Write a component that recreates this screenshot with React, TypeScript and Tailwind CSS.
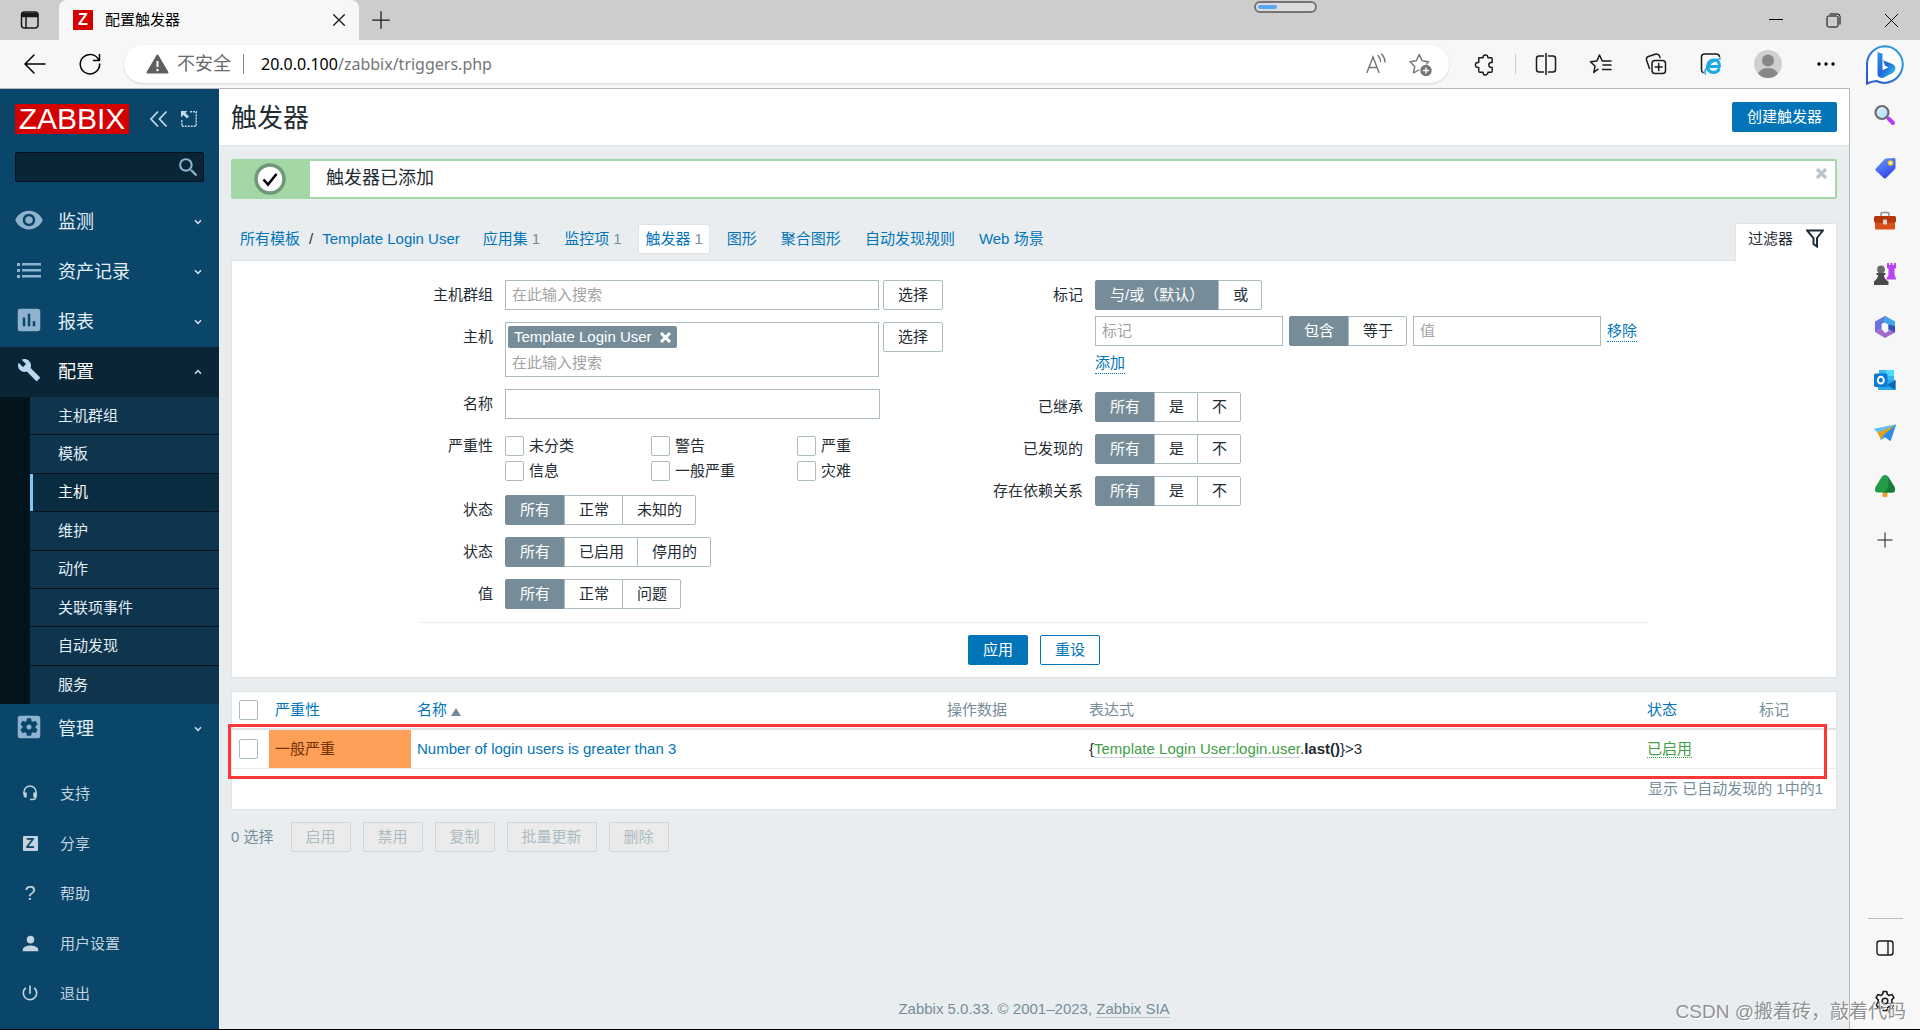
import React from 'react';
import type { ReactNode } from 'react';
import {
  MdAssessment,
  MdBuild,
  MdPerson,
  MdPowerSettingsNew,
  MdSearch,
  MdSettingsApplications,
  MdVisibility,
} from 'react-icons/md';

/* ---------- line icons of the browser chrome ---------- */

function Line({ size = 24, w = 1.5, children, className = '' }: { size?: number; w?: number; children: ReactNode; className?: string }) {
  return (
    <svg width={size} height={size} viewBox="0 0 24 24" fill="none" stroke="currentColor" strokeWidth={w} strokeLinecap="round" strokeLinejoin="round" className={`shrink-0 ${className}`} aria-hidden="true">
      {children}
    </svg>
  );
}

function TitleBar() {
  return (
    <header className="relative flex h-10 shrink-0 bg-[#cdcdcd] text-[#1b1b1b]">
      <button type="button" aria-label="标签操作" className="flex w-[59px] items-center justify-center">
        <svg width="20" height="20" viewBox="0 0 20 20" fill="none" stroke="#1b1b1b" strokeWidth="1.5" aria-hidden="true">
          <rect x="1.5" y="2" width="16.5" height="16" rx="3" />
          <path d="M2 3.6h15.500v3H2z" fill="#1b1b1b" />
          <path d="M6 7v11" />
        </svg>
      </button>
      <div className="flex w-[300px] items-center rounded-t-lg bg-[#f7f7f7] pl-3.5 pr-2">
        <span className="flex h-5 w-5 items-center justify-center bg-[#d40000] text-base font-bold leading-5 text-white">Z</span>
        <span className="ml-3 grow text-[15px] leading-5 text-black">配置触发器</span>
        <button type="button" aria-label="关闭标签页" className="p-1">
          <Line size={16} w={2}><path d="M4 4l16 16M20 4L4 20" /></Line>
        </button>
      </div>
      <button type="button" aria-label="新建标签页" className="flex w-[43px] items-center justify-center">
        <Line size={20}><path d="M12 2v20M2 12h20" /></Line>
      </button>
      <div className="grow" />
      <div className="absolute left-[1254px] top-px flex h-3 w-[63px] items-center rounded-full border-2 border-[#757575] bg-[#dcdcdc] px-0.5">
        <div className="h-1 w-[19px] rounded-full bg-[#58a6f8]" />
      </div>
      <div className="flex">
        <button type="button" aria-label="最小化" className="flex w-[57px] items-center justify-center">
          <svg width="14" height="14" viewBox="0 0 14 14" stroke="#000" aria-hidden="true"><path d="M0 6.500h14" /></svg>
        </button>
        <button type="button" aria-label="还原" className="flex w-[58px] items-center justify-center">
          <svg width="15" height="15" viewBox="0 0 15 15" stroke="#000" fill="none" aria-hidden="true"><rect x="1" y="3" width="11" height="11" rx="1.500" /><path d="M3.500 1h8q2.500 0 2.500 2.500v8" /></svg>
        </button>
        <button type="button" aria-label="关闭" className="flex w-[58px] items-center justify-center">
          <svg width="15" height="15" viewBox="0 0 15 15" stroke="#000" aria-hidden="true"><path d="M1 1l13 13M14 1L1 14" /></svg>
        </button>
      </div>
    </header>
  );
}

function ChromeButton({ label, children }: { label: string; children: ReactNode }) {
  return (
    <button type="button" aria-label={label} className="flex h-10 w-[55px] shrink-0 items-center justify-center text-[#1b1b1b]">
      {children}
    </button>
  );
}

function Toolbar() {
  return (
    <div className="flex h-12 shrink-0 items-center bg-[#f7f7f7]">
      <button type="button" aria-label="返回" className="ml-1.5 flex w-[57px] items-center justify-center">
        <Line size={24}><path d="M22 12H2.500M11 3L2 12l9 9" /></Line>
      </button>
      <button type="button" aria-label="刷新" className="flex w-[53px] items-center justify-center">
        <Line size={24}><path d="M21 8.500A9.700 9.700 0 1 0 21.700 12M21.500 2.500v6h-6" /></Line>
      </button>
      <div className="ml-2 flex h-[38px] min-w-0 grow items-center rounded-full bg-white pl-[22px] pr-[7px] text-lg leading-6 shadow-sm">
        <svg width="23" height="20" viewBox="0 0 23 20" className="shrink-0" aria-hidden="true">
          <path d="M11.500 1.500L21.500 18.500h-20z" fill="#5f5f5f" stroke="#5f5f5f" strokeWidth="2" strokeLinejoin="round" />
          <path d="M11.500 7v6" stroke="#fff" strokeWidth="2" />
          <circle cx="11.500" cy="16" r="1.200" fill="#fff" />
        </svg>
        <span className="ml-2 shrink-0 text-[#6a6a6a]">不安全</span>
        <span className="ml-3 h-5 w-px bg-[#8a8a8a]" />
        <div className="ml-[17px] grow whitespace-nowrap font-['Noto_Sans',sans-serif] text-base text-[#757575]">
          <span className="text-black">20.0.0.100</span>/zabbix/triggers.php
        </div>
        <button type="button" aria-label="朗读此页" className="flex w-11 justify-center text-[#757575]">
          <svg width="22" height="24" viewBox="0 0 22 24" fill="none" stroke="currentColor" strokeWidth="1.400" strokeLinecap="round" aria-hidden="true"><path d="M2 20.500L8 5l6 15.500M4 15.500h8M13 3.500q2.500 2.500 2.500 6M16.500 2q3.500 3.500 3.500 8" /></svg>
        </button>
        <button type="button" aria-label="收藏此页" className="flex w-11 justify-center text-[#757575]">
          <Line w={1.4}>
            <path d="M10.800 18l-5.300 3 1.200-6.500L2 9.700l6.300-1L11.200 2.500l2.900 6.200 6.500 1-2 2.200" />
            <circle cx="18" cy="18.500" r="5" fill="currentColor" />
            <path d="M18 16v5M15.500 18.500h5" stroke="#fff" />
          </Line>
        </button>
      </div>
      <div className="-mr-[3px] ml-2 flex items-center">
        <ChromeButton label="扩展">
          <Line size={23}><path d="M6 5h4.500V4.500a2.500 2.500 0 0 1 5 0V5H19q1 0 1 1v4h-1a2.500 2.500 0 0 0 0 5h1v4q0 1-1 1h-3.500v.5a2.500 2.500 0 0 1-5 0V20H7q-1 0-1-1v-4H5a2.500 2.500 0 0 1 0-5h1z" /></Line>
        </ChromeButton>
        <span className="ml-[3px] mr-0.5 h-5 w-px bg-[#c8c8c8]" />
        <ChromeButton label="分屏">
          <Line><path d="M9.500 4H5Q2.500 4 2.500 6.500v11Q2.500 20 5 20h4.500M14.500 4H19q2.500 0 2.500 2.500v11Q21.500 20 19 20h-4.500M12 1.500v21" /></Line>
        </ChromeButton>
        <ChromeButton label="收藏夹">
          <Line><path d="M9 17.200L4.800 20.500l1.300-6.300L1.500 9.700l6.400-.8L10.500 3l2.700 5.900h8.800M14 13h8M13.500 17.500H22" /></Line>
        </ChromeButton>
        <ChromeButton label="集锦">
          <Line><rect x="8" y="8.500" width="13.500" height="13" rx="3" /><path d="M14.700 11.500v7M11.200 15h7M5.500 16.500L2.500 8Q2 5.500 4.300 4.500L12 2q2.500-.5 3.500 2l.5 1.500" /></Line>
        </ChromeButton>
        <ChromeButton label="IE 模式">
          <Line>
            <path d="M4 20.500Q2.500 20 2.500 18V5q0-3 3-3H17q3 0 3.500 2.500" />
            <path d="M8.500 14.500h12q.3-6.500-5.700-6.500c-8 0-8.500 12.500-.5 12.500q4 0 5.500-3" stroke="#1ba8e8" strokeWidth="3" />
            <path d="M6.500 22c-3-2 4-13 15-15.500" stroke="#1ba8e8" strokeWidth="1.500" />
          </Line>
        </ChromeButton>
        <button type="button" aria-label="个人资料" className="flex w-[60px] justify-center">
          <svg width="28" height="28" viewBox="0 0 28 28" aria-hidden="true">
            <circle cx="14" cy="14" r="14" fill="#d2d0ce" />
            <circle cx="14" cy="10.500" r="6" fill="#8a8886" />
            <path d="M4 23.500q3-5.500 10-5.500t10 5.500Q20 28 14 28T4 23.500z" fill="#8a8886" />
          </svg>
        </button>
        <ChromeButton label="更多">
          <svg width="18" height="4" viewBox="0 0 18 4" aria-hidden="true"><circle cx="2" cy="2" r="1.700" /><circle cx="9" cy="2" r="1.700" /><circle cx="16" cy="2" r="1.700" /></svg>
        </ChromeButton>
      </div>
    </div>
  );
}

/* ---------- right rail of the browser ---------- */

const railIcons: { label: string; art: ReactNode }[] = [
  {
    label: '搜索',
    art: (
      <>
        <defs>
          <linearGradient id="lens" x1="0" y1="0" x2="1" y2="1"><stop stopColor="#e4f5ff" /><stop offset="1" stopColor="#a9d6f7" /></linearGradient>
        </defs>
        <path d="M14.500 14.500l4.500 4.500" stroke="#b63df5" strokeWidth="4" strokeLinecap="round" />
        <circle cx="8" cy="8.500" r="6.500" fill="url(#lens)" stroke="#6b6b6b" strokeWidth="2.200" />
      </>
    ),
  },
  {
    label: '购物',
    art: (
      <>
        <defs><linearGradient id="tag" x1="0" y1="0" x2="0.600" y2="1"><stop stopColor="#64a4ff" /><stop offset="1" stopColor="#3a40ea" /></linearGradient></defs>
        <path d="M12.500 1.500L20 1q1.500 0 1.500 1.500v8q0 1-.7 1.800L12 21q-1.200 1-2.300 0L1.800 13.800q-1-1.100 0-2.300L10.500 2.300q.9-.8 2-.8z" fill="url(#tag)" />
        <circle cx="16.500" cy="6" r="2" fill="#fff" stroke="#f2c811" strokeWidth="1.500" />
      </>
    ),
  },
  {
    label: '工具',
    art: (
      <>
        <path d="M7 6V4q0-1.500 1.500-1.500h5Q15 2.500 15 4v2" fill="none" stroke="#8f8f8f" strokeWidth="1.500" />
        <rect x="1" y="10" width="20" height="9.500" rx="1.500" fill="#d84f17" />
        <rect x="0" y="6" width="22" height="6.500" rx="1.500" fill="#b5360c" />
        <rect x="9" y="9.500" width="4" height="5" rx="1" fill="#d9d9d9" />
      </>
    ),
  },
  {
    label: '游戏',
    art: (
      <>
        <path d="M13 0h2v2h1.500V0h2v2H20V0h2v5l-1.500 1v6l1.500 3.500v1H12.500v-1L14.500 12V6L13 5z" fill="#b944f4" />
        <circle cx="7" cy="6.500" r="3.900" fill="#6b6b6b" />
        <path d="M2.500 10h9v2H10q0 4 4.500 6.500V22H-.5v-3.500Q4 16 4 12H2.500z" fill="#4a4a4a" />
      </>
    ),
  },
  {
    label: 'Microsoft 365',
    art: (
      <>
        <path d="M11 0l9.500 5.500v6l-6 3.500V8.500L8 5z" fill="#3b7de0" />
        <path d="M11 0L1 5.500V16L7.500 13V8l4-2.300z" fill="#6674dc" />
        <path d="M1 16L11 22l10-5.500v-5L11 17l-3.500-4z" fill="#a06cd0" />
        <path d="M21 5.500v11L14.500 13V8.500z" fill="#3452b4" />
        <path d="M11 0L21 5.500V10l-6.500-1.500L9 5z" fill="#42a5e8" />
      </>
    ),
  },
  {
    label: 'Outlook',
    art: (
      <>
        <rect x="5" y="1" width="15" height="13" fill="#35b8f1" />
        <rect x="12" y="1" width="8" height="6" fill="#50d9ff" />
        <path d="M4 11l17.500 0V20q0 1-1 1H5q-1 0-1-1z" fill="#28a8ea" />
        <path d="M21.500 11L13 16l8.500 5z" fill="#1066b5" />
        <rect x="0" y="4.500" width="13.500" height="13.500" rx="1.500" fill="#0f78d4" />
        <ellipse cx="6.800" cy="11.200" rx="3" ry="3.400" fill="none" stroke="#fff" strokeWidth="2" />
      </>
    ),
  },
  {
    label: '投递',
    art: (
      <>
        <path d="M0 7L22 2.500 16.500 19 11 15.500 7 18 5 11.500z" fill="#3ea5f5" />
        <path d="M0 7L22 2.500 4.500 11.500z" fill="#62c1fb" />
        <path d="M3.500 10.500L21 3.500 9 14l-2 4z" fill="#e8a013" />
        <path d="M9 13.500L22 2.500 16.500 19z" fill="#2f8eea" />
      </>
    ),
  },
  {
    label: '电子树',
    art: (
      <>
        <rect x="8.500" y="16" width="5" height="6" rx="1" fill="#e9a12b" />
        <path d="M11 0q2 0 3.200 1.800L20.500 12q2 5.500-3 5.500h-13q-5 0-3-5.500L7.800 1.800Q9 0 11 0z" fill="#259a49" />
        <path d="M13.500 1l7 11q2 5.500-3 5.500H9q8-4 4.500-16.500z" fill="#187a38" />
      </>
    ),
  },
];

function BrowserRail() {
  return (
    <aside className="flex w-[70px] shrink-0 flex-col items-center bg-[#f7f7f7] pt-[5px]">
      <button type="button" aria-label="Bing" className="mb-[19px]">
        <svg width="40" height="40" viewBox="0 0 40 40" aria-hidden="true">
          <defs>
            <linearGradient id="bub" x1="0" y1="1" x2="1" y2="0"><stop stopColor="#2a55c8" /><stop offset="1" stopColor="#2ba7e8" /></linearGradient>
            <linearGradient id="bb" x1="0" y1="0" x2="1" y2="1"><stop stopColor="#2f9bf0" /><stop offset="0.500" stopColor="#2266dd" /><stop offset="1" stopColor="#2fd4e0" /></linearGradient>
          </defs>
          <path d="M20 1.200A18.300 18.300 0 1 1 11.500 36Q6 36.500 2 38.500V19A18.300 18.300 0 0 1 20 1.200z" fill="#fff" stroke="url(#bub)" strokeWidth="2" />
          <path d="M12.500 7l5 1.800v16.500l6-3-3.500-1.500-2-5.500 10 4q3.500 2 2 6-.8 1.500-2.500 2.700L18 33q-5.500 0-5.500-4z" fill="url(#bb)" />
        </svg>
      </button>
      <div className="flex flex-col gap-[31px]">
        {railIcons.map((i) => (
          <button type="button" key={i.label} aria-label={i.label}>
            <svg width="22" height="22" viewBox="0 0 22 22" className="block" aria-hidden="true">{i.art}</svg>
          </button>
        ))}
        <button type="button" aria-label="自定义" className="mt-1 flex justify-center">
          <svg width="16" height="16" viewBox="0 0 16 16" stroke="#1b1b1b" aria-hidden="true"><path d="M8 .5v15M.5 8h15" /></svg>
        </button>
      </div>
      <div className="mt-auto flex flex-col items-center pb-4">
        <div className="h-px w-[35px] bg-[#bdbdbd]" />
        <button type="button" aria-label="隐藏侧栏" className="mt-5">
          <svg width="18" height="18" viewBox="0 0 18 18" fill="none" stroke="#1b1b1b" strokeWidth="1.400" aria-hidden="true"><rect x="1" y="2" width="16" height="14" rx="2.500" /><path d="M12 2v14" /></svg>
        </button>
        <button type="button" aria-label="设置" className="mt-8">
          <svg width="24" height="24" viewBox="0 0 24 24" fill="none" stroke="#1b1b1b" strokeWidth="1.600" strokeLinejoin="round" aria-hidden="true">
            <path d="M10.300 2.500h3.400l.7 2.900 1.900 1.100 2.800-.9 1.800 3-2.100 2.100v2.600l2.100 2.100-1.800 3-2.800-.9-1.900 1.100-.7 2.900h-3.400l-.7-2.900-1.900-1.100-2.800.9-1.800-3 2.100-2.100v-2.600L3.100 8.600l1.800-3 2.800.9 1.900-1.100z" />
            <circle cx="12" cy="12" r="2.800" />
          </svg>
        </button>
      </div>
    </aside>
  );
}

/* ---------- Zabbix menu ---------- */

function Chevron({ up = false }: { up?: boolean }) {
  return (
    <svg width="8" height="6" viewBox="0 0 8 6" fill="none" stroke="currentColor" strokeWidth="1.500" aria-hidden="true">
      <path d={up ? 'M1 4.800L4 1.500l3 3.300' : 'M1 1.200l3 3.300 3-3.300'} />
    </svg>
  );
}

const ListIcon = (
  <svg width="24" height="15" viewBox="0 0 24 15" fill="currentColor" aria-hidden="true">
    <path d="M0 0h3v3H0zM0 6h3v3H0zM0 12h3v3H0zM5 0h19v2.500H5zM5 6h19v2.500H5zM5 12h19v2.500H5z" />
  </svg>
);

const HeadsetIcon = (
  <svg width="14" height="16" viewBox="0 0 14 16" fill="none" stroke="currentColor" strokeWidth="1.500" aria-hidden="true">
    <path d="M1 9V7a6 6 0 0 1 12 0v4.500q0 3-3.500 3H7" />
    <path d="M.5 7.500h3.200v5H2.500Q.5 12.500.5 10.500zM13.500 7.500h-3.200v5h1.200q2 0 2-2z" fill="currentColor" stroke="none" />
  </svg>
);

function MenuItem({ icon, text, open = false }: { icon: ReactNode; text: string; open?: boolean }) {
  return (
    <a href="#" className={open ? 'flex h-[50px] items-center bg-[#092536] pr-[17px] text-[#b9d7ee]' : 'flex h-[50px] items-center pr-[17px] text-[#8fb3cf]'}>
      <span className="flex w-[58px] shrink-0 justify-center pb-1">{icon}</span>
      <span className={open ? 'grow text-lg leading-6 text-white' : 'grow text-lg leading-6 text-[#e3eef6]'}>{text}</span>
      <span className="text-[#d3e2ee]"><Chevron up={open} /></span>
    </a>
  );
}

const submenu = ['主机群组', '模板', '主机', '维护', '动作', '关联项事件', '自动发现', '服务'];

const bottomMenu: { text: string; icon: ReactNode }[] = [
  { text: '支持', icon: HeadsetIcon },
  { text: '分享', icon: <span className="flex h-[15px] w-[15px] items-center justify-center rounded-[1px] bg-[#c3d3df] text-sm font-bold leading-none text-[#0a466a]">Z</span> },
  { text: '帮助', icon: <span className="text-xl leading-5">?</span> },
  { text: '用户设置', icon: <MdPerson size={23} /> },
  { text: '退出', icon: <MdPowerSettingsNew size={20} /> },
];

function Sidebar() {
  return (
    <nav className="flex w-[219px] shrink-0 flex-col bg-[#0a466a]">
      <div className="flex items-center pl-[15px] pt-[15px] text-[#c3d7e6]">
        <a href="#" className="flex h-[30px] w-[114px] items-center justify-center bg-[#d40000] text-[30px] leading-[30px] text-white">ZABBIX</a>
        <button type="button" aria-label="折叠菜单" className="ml-5">
          <svg width="20" height="18" viewBox="0 0 20 18" fill="none" stroke="currentColor" strokeWidth="1.800" aria-hidden="true"><path d="M9 1.500L2 9l7 7.500M17.500 1.500L10.500 9l7 7.500" /></svg>
        </button>
        <button type="button" aria-label="隐藏菜单" className="ml-3">
          <svg width="16" height="16" viewBox="0 0 16 16" fill="none" stroke="currentColor" strokeWidth="1.500" aria-hidden="true">
            <path d="M9 .8h6.200v14.400H.8V9" strokeDasharray="2 1" />
            <path d="M0 0h6.500L4.500 2 8 5.500 6 7.500 2.300 4 0 6.500z" fill="currentColor" stroke="none" />
          </svg>
        </button>
      </div>
      <div className="mx-[15px] mb-[15px] mt-[18px] flex h-[30px] items-center rounded-xs border border-[#04121b] bg-[#092536] pr-0.5">
        <input type="text" aria-label="搜索" className="min-w-0 grow bg-transparent px-2 text-[15px] text-white outline-none" />
        <button type="button" aria-label="搜索" className="text-[#8fb3cf]"><MdSearch size={25} /></button>
      </div>
      <MenuItem icon={<MdVisibility size={30} />} text="监测" />
      <MenuItem icon={ListIcon} text="资产记录" />
      <MenuItem icon={<MdAssessment size={30} />} text="报表" />
      <MenuItem icon={<MdBuild size={24} />} text="配置" open />
      <ul className="grid h-[307px] grid-rows-8 bg-[#04141d] pl-[30px] text-[15px] leading-5 text-[#e3eef6]">
        {submenu.map((t) => (
          <li key={t} className="border-b border-[#04141d] bg-[#0f344d] last:border-b-0">
            <a href="#" className={t === '主机' ? 'flex h-full items-center border-l-[3px] border-[#7fc8f8] bg-[#0a2c40] pl-[25px] text-white' : 'flex h-full items-center pl-7'}>{t}</a>
          </li>
        ))}
      </ul>
      <MenuItem icon={<MdSettingsApplications size={30} />} text="管理" />
      <ul className="mt-[15px] text-[15px] leading-5 text-[#c3d3df]">
        {bottomMenu.map((b) => (
          <li key={b.text}>
            <a href="#" className="flex h-[50px] items-center">
              <span className="flex w-[60px] justify-center pb-0.5">{b.icon}</span>
              <span>{b.text}</span>
            </a>
          </li>
        ))}
      </ul>
    </nav>
  );
}

/* ---------- form controls ---------- */

function Segments({ name, options }: { name: string; options: string[] }) {
  return (
    <div role="radiogroup" aria-label={name} className="flex">
      {options.map((o, i) => (
        <label key={o} className="relative -ml-px first:ml-0">
          <input type="radio" name={name} defaultChecked={i === 0} className="peer sr-only" />
          <span className="flex h-[30px] items-center whitespace-nowrap border border-[#acbbc2] bg-white pl-3.5 pr-[13px] peer-checked:border-[#768d99] peer-checked:bg-[#768d99] peer-checked:text-white [label:first-child>&]:rounded-l-xs [label:first-child>&]:pr-3.5 [label:last-child>&]:rounded-r-xs">{o}</span>
        </label>
      ))}
    </div>
  );
}

function Check({ label }: { label: string }) {
  return (
    <label className="flex items-center gap-[5px]">
      <input type="checkbox" className="h-5 w-[19px] appearance-none rounded-xs border border-[#acbbc2] bg-white" />
      <span>{label}</span>
    </label>
  );
}

function SelectButton() {
  return <button type="button" className="h-[30px] w-[60px] rounded-xs border border-[#acbbc2] bg-white">选择</button>;
}

function Row({ label, htmlFor, children }: { label: string; htmlFor?: string; children: ReactNode }) {
  return (
    <>
      {htmlFor ? <label htmlFor={htmlFor} className="pt-[5px] text-right">{label}</label> : <span className="pt-[5px] text-right">{label}</span>}
      <div>{children}</div>
    </>
  );
}

const inputCls = 'h-[30px] border border-[#acbbc2] bg-white px-1.5 pb-0.5 outline-none placeholder:text-[#a3a3a3]';
const dotted = 'border-b border-dotted border-[#0275b8] text-[#0275b8]';

function Filter() {
  return (
    <form className="border border-[#dfe4e7] bg-white pb-3 pt-[19px]" onSubmit={(e) => e.preventDefault()}>
      <div className="mx-auto w-[1228px] max-w-full">
        <div className="flex gap-[50px] border-b border-[#ebeef0] pb-[13px]">
          <div className="grid grid-cols-[73px_438px] content-start gap-3">
            <Row label="主机群组" htmlFor="groups">
              <div className="flex gap-1">
                <input id="groups" type="text" placeholder="在此输入搜索" className={`${inputCls} w-[375px]`} />
                <SelectButton />
              </div>
            </Row>
            <Row label="主机" htmlFor="hosts">
              <div className="flex items-start gap-1">
                <div className="h-[55px] w-[375px] border border-[#acbbc2] px-0.5 pt-[3px]">
                  <div className="flex h-[22px] w-fit items-center gap-2 rounded-xs bg-[#768d99] px-1.5 text-white">
                    Template Login User
                    <button type="button" aria-label="移除 Template Login User">
                      <svg width="11" height="11" viewBox="0 0 11 11" stroke="#fff" strokeWidth="3" aria-hidden="true"><path d="M1 1l9 9M10 1l-9 9" /></svg>
                    </button>
                  </div>
                  <input id="hosts" type="text" placeholder="在此输入搜索" className="mt-0.5 h-6 w-full px-1 outline-none placeholder:text-[#a3a3a3]" />
                </div>
                <SelectButton />
              </div>
            </Row>
            <Row label="名称" htmlFor="name">
              <input id="name" type="text" className={`${inputCls} w-[375px]`} />
            </Row>
            <Row label="严重性">
              <div className="grid w-fit grid-cols-[146px_146px_auto] gap-y-[5px] pb-0.5 pt-[5px]">
                {['未分类', '警告', '严重', '信息', '一般严重', '灾难'].map((s) => <Check key={s} label={s} />)}
              </div>
            </Row>
            <Row label="状态"><Segments name="state" options={['所有', '正常', '未知的']} /></Row>
            <Row label="状态"><Segments name="status" options={['所有', '已启用', '停用的']} /></Row>
            <Row label="值"><Segments name="value" options={['所有', '正常', '问题']} /></Row>
          </div>
          <div className="grid grid-cols-[90px_auto] content-start gap-3">
            <Row label="标记">
              <Segments name="evaltype" options={['与/或（默认）', '或']} />
              <div className="mt-1.5 flex items-center gap-1.5">
                <input type="text" aria-label="标记" placeholder="标记" className={`${inputCls} w-[188px]`} />
                <Segments name="operator" options={['包含', '等于']} />
                <input type="text" aria-label="值" placeholder="值" className={`${inputCls} w-[188px]`} />
                <button type="button" className={dotted}>移除</button>
              </div>
              <button type="button" className={`${dotted} mb-1.5 mt-[7px] block`}>添加</button>
            </Row>
            <Row label="已继承"><Segments name="inherited" options={['所有', '是', '不']} /></Row>
            <Row label="已发现的"><Segments name="discovered" options={['所有', '是', '不']} /></Row>
            <Row label="存在依赖关系"><Segments name="dependent" options={['所有', '是', '不']} /></Row>
          </div>
        </div>
        <div className="flex justify-center gap-3 pt-3">
          <button type="submit" className="h-[30px] w-[60px] rounded-xs bg-[#0275b8] text-white">应用</button>
          <button type="reset" className="h-[30px] w-[60px] rounded-xs border border-[#0275b8] bg-white text-[#0275b8]">重设</button>
        </div>
      </div>
    </form>
  );
}

/* ---------- page parts ---------- */

const tabs: { text: string; count?: number; active?: boolean }[] = [
  { text: '应用集', count: 1 },
  { text: '监控项', count: 1 },
  { text: '触发器', count: 1, active: true },
  { text: '图形' },
  { text: '聚合图形' },
  { text: '自动发现规则' },
  { text: 'Web 场景' },
];

function Breadcrumbs() {
  return (
    <div className="flex items-end justify-between">
      <nav className="mb-1.5 flex h-[30px] items-center pl-[9px] text-[#0275b8]">
        <a href="#">所有模板</a>
        <span className="mx-[9px] text-[#1f2c33]">/</span>
        <a href="#" className="mr-[11px]">Template Login User</a>
        {tabs.map((t) => (
          <a key={t.text} href="#" className={t.active ? 'mx-[5px] rounded-xs border border-[#dfe4e7] bg-white px-1.5 py-1' : 'mx-[5px] border border-transparent px-1.5 py-1'}>
            {t.text}
            {t.count && <span className="ml-1 text-[#768d99]">{t.count}</span>}
          </a>
        ))}
      </nav>
      <button type="button" className="relative -mb-px flex h-[38px] w-[102px] items-center justify-center gap-[13px] rounded-t-xs border border-b-0 border-[#dfe4e7] bg-white pb-2">
        过滤器
        <svg width="18" height="19" viewBox="0 0 18 19" fill="none" stroke="#1f2c33" strokeWidth="2" aria-hidden="true"><path d="M1 1.500h16L11 9v8.500L7.500 15V9z" /></svg>
      </button>
    </div>
  );
}

function Results() {
  const th = 'px-1.5 text-left font-normal';
  return (
    <div className="relative mt-[13px]">
      <div className="border border-[#dfe4e7] bg-white">
        <table className="w-full table-fixed border-collapse">
          <colgroup>
            <col className="w-[37px]" />
            <col className="w-[142px]" />
            <col />
            <col className="w-[142px]" />
            <col className="w-[558px]" />
            <col className="w-[112px]" />
            <col className="w-[83px]" />
          </colgroup>
          <thead>
            <tr className="h-[37px] border-b-2 border-[#dfe4e7] text-[#768d99]">
              <th className="pl-[7px] text-left"><input type="checkbox" aria-label="全选" className="block h-5 w-[19px] appearance-none rounded-xs border border-[#acbbc2] bg-white" /></th>
              <th className={th}><a href="#" className="text-[#0275b8]">严重性</a></th>
              <th className={th}>
                <a href="#" className="flex items-center gap-1 text-[#0275b8]">
                  名称
                  <svg width="10" height="8" viewBox="0 0 10 8" className="mt-1" aria-hidden="true"><path d="M5 0l5 8H0z" fill="#768d99" /></svg>
                </a>
              </th>
              <th className={th}>操作数据</th>
              <th className={th}>表达式</th>
              <th className={th}><a href="#" className="text-[#0275b8]">状态</a></th>
              <th className={th}>标记</th>
            </tr>
          </thead>
          <tbody>
            <tr className="h-[39px] border-b border-[#ebeef0]">
              <td className="pl-[7px]"><input type="checkbox" aria-label="选择 Number of login users is greater than 3" className="block h-5 w-[19px] appearance-none rounded-xs border border-[#acbbc2] bg-white" /></td>
              <td className="bg-[#ffa059] px-1.5 text-[#733100]">一般严重</td>
              <td className="px-1.5"><a href="#" className="text-[#0275b8]">Number of login users is greater than 3</a></td>
              <td />
              <td className="px-1.5">
                {'{'}<a href="#" className="border-b border-[#ccd5d9] text-[#429e47]">Template Login User:login.user</a>.<b>last()</b>{'}>3'}
              </td>
              <td className="px-1.5"><a href="#" className="border-b border-dotted border-[#429e47] text-[#429e47]">已启用</a></td>
              <td />
            </tr>
          </tbody>
        </table>
        <p className="h-10 pr-[13px] pt-2.5 text-right text-[#768d99]">显示 已自动发现的 1中的1</p>
      </div>
      <div className="pointer-events-none absolute -left-[3px] right-2.5 top-[33px] h-[55px] border-[3px] border-[#fb3838]" />
    </div>
  );
}

export default function App() {
  return (
    <div className="relative flex min-h-screen flex-col overflow-hidden border-b border-black bg-[#f7f7f7] font-['Liberation_Sans','Noto_Sans_CJK_SC',sans-serif]">
      <TitleBar />
      <div className="flex grow">
        <div className="flex min-w-0 grow flex-col">
          <Toolbar />
          <div className="flex grow border-r border-t border-[#b9b9b9]">
            <Sidebar />
            <main className="flex min-w-0 grow flex-col bg-[#e9edf0] text-[15px] leading-5 text-[#1f2c33]">
              <div className="flex h-[57px] items-center justify-between border-b border-[#dfe4e7] bg-white px-3">
                <h1 className="pt-0.5 text-[26px] leading-8">触发器</h1>
                <button type="button" className="h-[30px] rounded-xs bg-[#0275b8] px-[15px] text-white">创建触发器</button>
              </div>
              <div className="px-3 pt-[13px]">
                <div className="flex h-10 rounded-xs border-2 border-[#a3d7a6] bg-white">
                  <div className="flex w-[77px] items-center justify-center bg-[#a3d7a6] pr-[3px]">
                    <svg width="32" height="32" viewBox="0 0 32 32" aria-hidden="true">
                      <circle cx="16" cy="16" r="14" fill="#fff" stroke="#71967a" strokeWidth="3.500" />
                      <path d="M9.500 16.500l4.500 5 8.500-10.500" fill="none" stroke="#000" strokeWidth="2.500" />
                    </svg>
                  </div>
                  <p className="grow pl-4 pt-[5px] text-lg leading-6">触发器已添加</p>
                  <button type="button" aria-label="关闭" className="mr-2 mt-[7px] self-start">
                    <svg width="11" height="11" viewBox="0 0 11 11" stroke="#bcc7cd" strokeWidth="3.500" aria-hidden="true"><path d="M1 1l9 9M10 1l-9 9" /></svg>
                  </button>
                </div>
                <div className="pt-6"><Breadcrumbs /></div>
                <Filter />
                <Results />
                <div className="flex items-center gap-3 pt-3 text-[#768d99]">
                  <span className="mr-[5px]">0 选择</span>
                  {['启用', '禁用', '复制', '批量更新', '删除'].map((t) => (
                    <button key={t} type="button" disabled className="h-[30px] rounded-xs border border-[#ccd5d9] bg-[#ebebeb] px-3.5 text-[#acbbc2]">{t}</button>
                  ))}
                </div>
              </div>
              <footer className="mt-auto pb-2.5 text-center text-[#768d99]">
                Zabbix 5.0.33. © 2001–2023, <a href="#" className="border-b border-[#b7c3c9]">Zabbix SIA</a>
              </footer>
            </main>
          </div>
        </div>
        <BrowserRail />
      </div>
      <div className="pointer-events-none absolute bottom-[3px] right-3.5 text-[19px] leading-7 text-[#8f9294] [text-shadow:1px_1px_0_#ffffff]">CSDN @搬着砖，敲着代码</div>
    </div>
  );
}
